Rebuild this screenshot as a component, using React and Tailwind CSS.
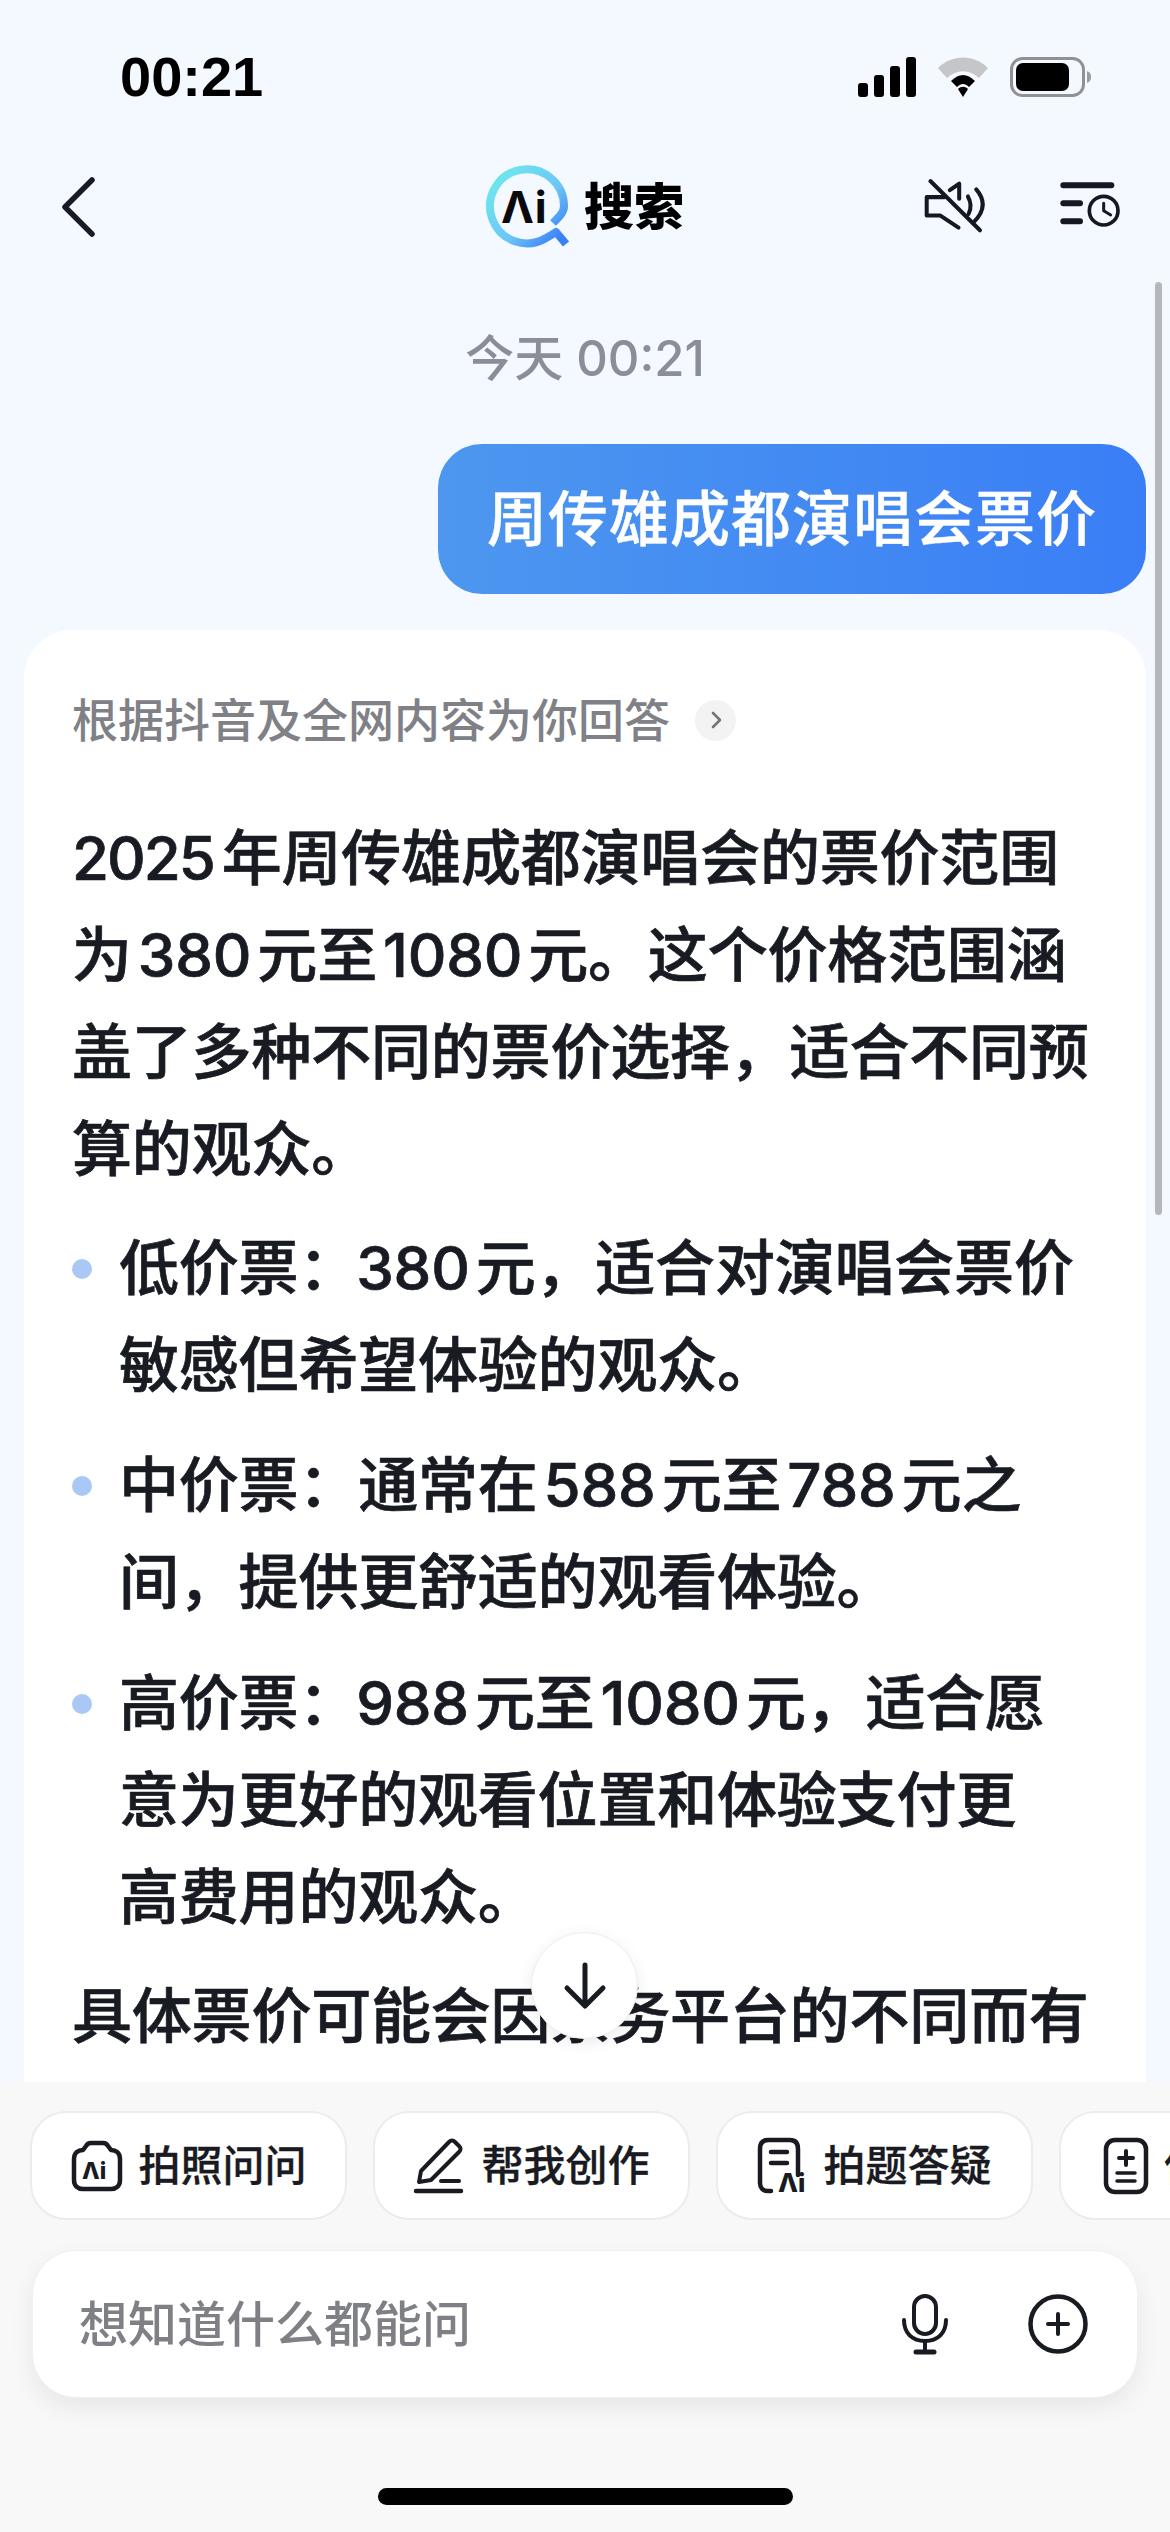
import React from "react";

const FONT = "[font-family:Inter,'Noto_Sans_CJK_SC',sans-serif]";

function N({ children, after }) {
  return <span className={after ? "ml-[-2px] mr-[6px]" : "mx-[6px]"}>{children}</span>;
}

function Line({ children }) {
  return <div className="h-[97px] whitespace-nowrap tracking-[-0.2px]">{children}</div>;
}

function Bullet({ lines }) {
  return (
    <div className="flex">
      <div className="w-[47px] shrink-0 pt-[39px]">
        <div className="h-[20px] w-[20px] rounded-full bg-[#a9c8f6]" />
      </div>
      <div>
        {lines.map((l, i) => (
          <Line key={i}>{l}</Line>
        ))}
      </div>
    </div>
  );
}

function Logo() {
  return (
    <svg width="92" height="92" viewBox="0 0 92 92" fill="none">
      <defs>
        <linearGradient id="lg" x1="0.1" y1="0.2" x2="0.9" y2="0.95">
          <stop offset="0" stopColor="#6ee3ee" />
          <stop offset="0.55" stopColor="#6cc6f6" />
          <stop offset="1" stopColor="#3a80f6" />
        </linearGradient>
      </defs>
      <path
        d="M71 63 C78 56 82 52 82 46 A37 37 0 1 0 64 78 C68 76 71 74 74 72 L84 84"
        stroke="url(#lg)"
        strokeWidth="8"
        strokeLinejoin="round"
      />
      <text x="19" y="63" fontFamily="Inter, sans-serif" fontWeight="700" fontSize="44" letterSpacing="1" fill="#0a0a0c">Λi</text>
    </svg>
  );
}

function Chip({ icon, label, gap }) {
  return (
    <div className={`flex h-[109px] w-[317px] shrink-0 items-center justify-center rounded-[36px] border-2 border-[#ececec] bg-white text-[42px] font-medium text-[#1a1b22] [-webkit-text-stroke:0.3px_#1a1b22] ${gap}`}>
      {icon}
      <span className="whitespace-nowrap">{label}</span>
    </div>
  );
}

export default function App() {
  return (
    <div className={`relative flex h-[2532px] w-[1170px] flex-col overflow-hidden bg-[#f4f8ff] ${FONT}`}>
      {/* status bar */}
      <div className="flex h-[154px] shrink-0 items-center justify-between pl-[120px] pr-[78px]">
        <span className="text-[56px] font-bold text-black [font-family:'Liberation_Sans',sans-serif]">00:21</span>
        <div className="flex items-center gap-[22px]">
          <svg width="58" height="40" viewBox="0 0 58 40" fill="#000">
            <rect x="0" y="26" width="10" height="14" rx="3" />
            <rect x="16" y="18" width="10" height="22" rx="3" />
            <rect x="32" y="9" width="10" height="31" rx="3" />
            <rect x="48" y="0" width="10" height="40" rx="3" />
          </svg>
          <svg width="50" height="40" viewBox="0 0 50 40" fill="none">
            <path d="M0 11 C14 -3 36 -3 50 11 L41 21 C31 12 19 12 9 21 Z" fill="#c4c6c8" />
            <path d="M13 24 C21 16 29 16 37 24 L31 30 C27 26 23 26 19 30 Z" fill="#000" />
            <path d="M20 32 C23 29 27 29 30 32 L25 40 Z" fill="#000" />
          </svg>
          <svg width="82" height="40" viewBox="0 0 82 40" fill="none">
            <rect x="1.5" y="1.5" width="72" height="37" rx="11" stroke="#8f9194" strokeWidth="3" />
            <rect x="6" y="6" width="53" height="28" rx="7" fill="#000" />
            <path d="M77 14 C80 15 81 17 81 20 C81 23 80 25 77 26 Z" fill="#9a9c9f" />
          </svg>
        </div>
      </div>

      {/* nav */}
      <div className="relative flex h-[102px] shrink-0 items-center justify-between pl-[60px] pr-[47px]">
        <svg className="mt-[3px]" width="36" height="62" viewBox="0 0 36 62" fill="none">
          <path d="M32 4 L5 31 L32 58" stroke="#191b22" strokeWidth="5.5" strokeLinecap="round" strokeLinejoin="round" />
        </svg>
        <div className="absolute left-[482px] top-[6px] flex items-center gap-[10px]">
          <Logo />
          <span className="pt-[2px] text-[50px] font-black leading-none text-black">搜索</span>
        </div>
        <div className="flex items-center gap-[70px]">
          <svg width="67" height="57" viewBox="120 85 200 170" fill="none" stroke="#161820" strokeWidth="12" strokeLinecap="round" strokeLinejoin="round">
            <path d="M148 97 L296 244" />
            <path d="M190 145 H137 V200 H178 L232 236" />
            <path d="M206 124 L234 105 V150" />
            <path d="M260 143 Q275 170 262 195" />
            <path d="M285 122 Q328 172 275 222" />
          </svg>
          <svg width="65" height="50" viewBox="530 100 195 150" fill="none" stroke="#161820" strokeLinecap="round">
            <path d="M546 116 H690" strokeWidth="18" />
            <path d="M546 170 H596" strokeWidth="18" />
            <path d="M546 224 H596" strokeWidth="18" />
            <circle cx="667" cy="192" r="43" strokeWidth="11" />
            <path d="M667 170 V192 L688 205" strokeWidth="9" strokeLinejoin="round" />
          </svg>
        </div>
      </div>

      {/* conversation */}
      <div className="relative min-h-0 flex-1 overflow-hidden">
        <div className="pt-[72px]">
          <div className="flex h-[60px] items-center justify-center text-[49px] font-medium leading-none text-[#8b8e95]">今天 00:21</div>
          <div className="mt-[56px] flex justify-end pr-[24px]">
            <div className="flex h-[150px] w-[708px] items-center justify-center rounded-[44px] bg-gradient-to-r from-[#4d97ef] to-[#3a7ef6] text-[60px] font-medium tracking-[1px] text-white [-webkit-text-stroke:0.4px_#ffffff]">
              周传雄成都演唱会票价
            </div>
          </div>
          <div className="mx-[24px] mt-[36px] rounded-[48px] bg-white pb-[200px] pl-[48px] pr-[24px] pt-[60px] text-[60px] font-medium leading-[97px] text-[#191b23]">
            <div className="flex h-[60px] items-center gap-[25px]">
              <span className="whitespace-nowrap text-[46px] font-medium leading-none text-[#808187]">根据抖音及全网内容为你回答</span>
              <span className="flex h-[41px] w-[41px] items-center justify-center rounded-full bg-[#f3f3f4]">
                <svg width="14" height="20" viewBox="0 0 14 20" fill="none">
                  <path d="M4 3 L11 10 L4 17" stroke="#73757b" strokeWidth="2.6" strokeLinecap="round" strokeLinejoin="round" />
                </svg>
              </span>
            </div>
            <div className="[-webkit-text-stroke:0.7px_#191b23]">
              <div className="mt-[60px]">
                <Line><span className="tracking-[-2px]">2025</span><span className="ml-[8px]">年周传雄成都演唱会的票价范围</span></Line>
                <Line>为<N>380</N>元至<N>1080</N>元。这个价格范围涵</Line>
                <Line>盖了多种不同的票价选择，适合不同预</Line>
                <Line>算的观众。</Line>
              </div>
              <div className="mt-[22px]">
                <Bullet lines={[<>低价票：<N after>380</N>元，适合对演唱会票价</>, "敏感但希望体验的观众。"]} />
              </div>
              <div className="mt-[23px]">
                <Bullet lines={[<>中价票：通常在<N>588</N>元至<N>788</N>元之</>, "间，提供更舒适的观看体验。"]} />
              </div>
              <div className="mt-[24px]">
                <Bullet lines={[<>高价票：<N after>988</N>元至<N>1080</N>元，适合愿</>, "意为更好的观看位置和体验支付更", "高费用的观众。"]} />
              </div>
              <div className="mt-[22px]">
                <Line>具体票价可能会因票务平台的不同而有</Line>
              </div>
            </div>
          </div>
        </div>

        {/* scroll indicator */}
        <div className="absolute left-[1155px] top-[26px] h-[933px] w-[7px] rounded-full bg-[#b4b7bc]" />

        {/* jump to bottom */}
        <div className="absolute left-[531px] top-[1676px] flex h-[107px] w-[107px] items-center justify-center rounded-full border border-[#eeeeee] bg-white shadow-[0_4px_16px_rgba(0,0,0,0.08)]">
          <svg width="46" height="50" viewBox="0 0 46 50" fill="none">
            <path d="M23 4 V44 M5 27 L23 45 L41 27" stroke="#191b22" strokeWidth="5" strokeLinecap="round" strokeLinejoin="round" />
          </svg>
        </div>
      </div>

      {/* bottom panel */}
      <div className="h-[450px] shrink-0 bg-[#f8f8f8] pt-[29px]">
        <div className="flex gap-[26px] overflow-hidden pl-[30px]">
          <Chip
            gap="gap-[14px]"
            label="拍照问问"
            icon={
              <svg width="54" height="54" viewBox="0 0 54 54" fill="none">
                <path d="M4 20 C4 14 8 11 13 11 L16 7 C17 5 19 4 21 4 H33 C35 4 37 5 38 7 L41 11 C46 11 50 14 50 20 V41 C50 47 46 50 41 50 H13 C8 50 4 47 4 41 Z" stroke="#1a1b22" strokeWidth="4.5" strokeLinejoin="round" />
                <text x="12" y="40" fontFamily="Inter, sans-serif" fontWeight="800" fontSize="23" fill="#1a1b22" stroke="none">Λi</text>
              </svg>
            }
          />
          <Chip
            gap="gap-[14px]"
            label="帮我创作"
            icon={
              <svg width="54" height="58" viewBox="0 0 54 58" fill="none" stroke="#1a1b22" strokeLinecap="round" strokeLinejoin="round">
                <path d="M8 34 L36 5 C38 3 40 3 42 5 L46 9 C48 11 48 13 46 15 L18 43 L6 45 Z" strokeWidth="4" />
                <path d="M28 44 H46" strokeWidth="4" />
                <path d="M3 54 H48" strokeWidth="4.5" />
              </svg>
            }
          />
          <Chip
            gap="gap-[8px]"
            label="拍题答疑"
            icon={
              <svg width="58" height="58" viewBox="0 0 58 58" fill="none" stroke="#1a1b22" strokeLinecap="round" strokeLinejoin="round">
                <path d="M14 54 H11 C6 54 3 51 3 46 V12 C3 6 6 3 11 3 H33 C38 3 41 6 41 12 V38" strokeWidth="4.5" />
                <path d="M14 15 H30 M14 26 H30" strokeWidth="4.5" />
                <text x="21" y="55" fontFamily="Inter, sans-serif" fontWeight="800" fontSize="26" fill="#1a1b22" stroke="none">Λi</text>
              </svg>
            }
          />
          <Chip
            gap="gap-[14px]"
            label="作业批改"
            icon={
              <svg width="46" height="58" viewBox="0 0 46 58" fill="none" stroke="#1a1b22" strokeLinecap="round">
                <rect x="3" y="3" width="40" height="52" rx="9" strokeWidth="4.5" />
                <path d="M23 14 V28 M16 21 H30" strokeWidth="4" />
                <path d="M14 36 H32 M14 44 H32" strokeWidth="3.5" />
              </svg>
            }
          />
        </div>

        <div className="ml-[32px] mt-[30px] flex h-[148px] w-[1106px] items-center justify-between rounded-[44px] border border-[#f0f0f0] bg-white pl-[46px] pr-[49px] shadow-[0_10px_24px_rgba(0,0,0,0.07)]">
          <span className="text-[49px] font-medium leading-none text-[#7f8085]">想知道什么都能问</span>
          <div className="flex items-center gap-[79px]">
            <svg width="48" height="62" viewBox="0 0 48 62" fill="none" stroke="#191b22" strokeLinecap="round">
              <rect x="13" y="3" width="22" height="38" rx="11" strokeWidth="4" />
              <path d="M3 27 C3 40 11 48 24 48 C37 48 45 40 45 27" strokeWidth="4" />
              <path d="M24 48 V58" strokeWidth="4" />
              <path d="M15 59 H33" strokeWidth="5" />
            </svg>
            <svg width="60" height="60" viewBox="0 0 60 60" fill="none" stroke="#191b22" strokeLinecap="round">
              <circle cx="30" cy="30" r="27.5" strokeWidth="4.5" />
              <path d="M30 20 V40 M20 30 H40" strokeWidth="4" />
            </svg>
          </div>
        </div>

        <div className="ml-[378px] mt-[90px] h-[17px] w-[415px] rounded-full bg-black" />
      </div>
    </div>
  );
}
